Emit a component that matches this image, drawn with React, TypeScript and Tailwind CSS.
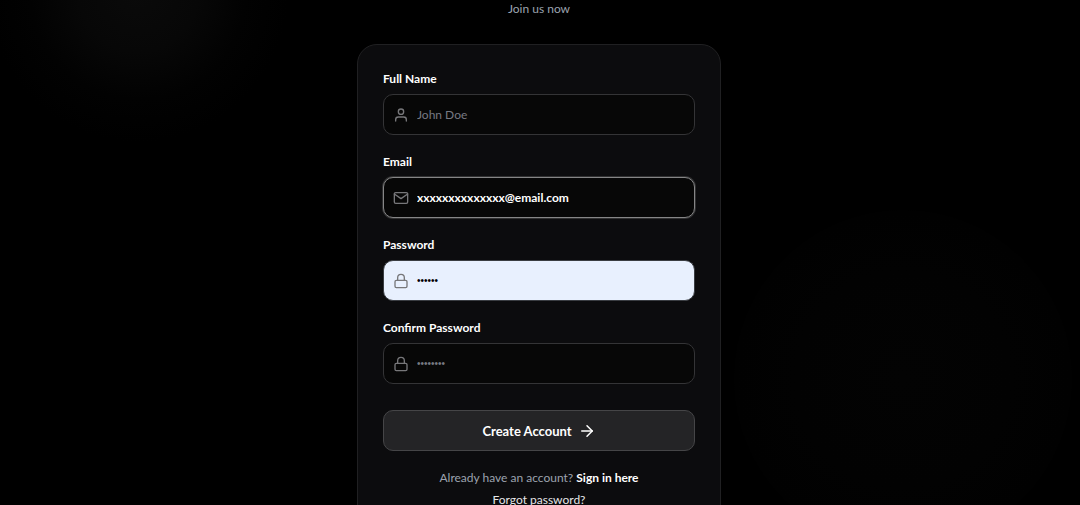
import { useState } from 'react'
import type { FormEvent, InputHTMLAttributes } from 'react'
import { FiArrowRight, FiLock, FiMail, FiUser } from 'react-icons/fi'
import type { IconType } from 'react-icons'
import clsx from 'clsx'

interface FieldProps extends InputHTMLAttributes<HTMLInputElement> {
    id: string
    label: string
    icon: IconType
    active?: boolean
    filled?: boolean
}

function Field({ id, label, icon: Icon, active, filled, type, ...props }: FieldProps) {
    return (
        <div>
            <label htmlFor={id} className="block mb-[7px] text-[12px] leading-4 font-bold text-white">
                {label}
            </label>
            <div
                className={clsx(
                    'flex items-center h-[41px] pl-[9px] rounded-[10px] border overflow-hidden',
                    active && 'border-[#858586] bg-[#070707] ring-1 ring-[#303031]',
                    filled && 'border-[#3a3d42] bg-[#e8f0fe]',
                    !active && !filled && 'border-[#343436] bg-[#070707]'
                )}
            >
                <Icon size={16} className="shrink-0 text-[#77777a]" aria-hidden="true" />
                <input
                    id={id}
                    type={type}
                    className={clsx(
                        'min-w-0 flex-1 h-full pl-2 pr-3 bg-transparent outline-none placeholder:font-normal placeholder:text-[#777983]',
                        type === 'password' ? "font-['Liberation_Sans',sans-serif] text-[10px]" : 'text-[12px] font-bold',
                        filled ? 'text-black' : 'text-white'
                    )}
                    {...props}
                />
            </div>
        </div>
    )
}

export default function App() {
    const [name, setName] = useState('')
    const [email, setEmail] = useState('xxxxxxxxxxxxxx@email.com')
    const [password, setPassword] = useState('secret')
    const [confirm, setConfirm] = useState('')

    const handleSubmit = (e: FormEvent) => {
        e.preventDefault()
    }

    return (
        <div className="relative min-h-screen overflow-hidden bg-black font-['Lato',sans-serif]">
            {/* Background glow */}
            <div className="absolute -top-[160px] -left-[14px] size-[304px] rounded-full bg-[radial-gradient(circle,#0a0a0a_0%,#070707_28%,#020202_50%,#000000_70%)]" />
            <div className="absolute top-[210px] right-[8px] size-[338px] rounded-full bg-[radial-gradient(circle,#030303_0%,#020202_45%,#010101_70%)]" />

            <main className="relative flex flex-col items-center pr-0.5 pb-8">
                <p className="h-[44px] text-[12px] leading-[18px] text-[#9ca3af]">Join us now</p>

                <div className="w-full max-w-[364px] px-[25px] pt-[26px] pb-[25px] rounded-[20px] border border-[#202022] bg-[#0c0c0e]">
                    <form onSubmit={handleSubmit} className="flex flex-col gap-[19px]">
                        <Field id="name" label="Full Name" icon={FiUser} type="text" placeholder="John Doe"
                            value={name} onChange={(e) => setName(e.target.value)} />
                        <Field id="email" label="Email" icon={FiMail} type="email" active
                            value={email} onChange={(e) => setEmail(e.target.value)} />
                        <Field id="password" label="Password" icon={FiLock} type="password" filled
                            value={password} onChange={(e) => setPassword(e.target.value)} />
                        <Field id="confirm" label="Confirm Password" icon={FiLock} type="password" placeholder="••••••••"
                            value={confirm} onChange={(e) => setConfirm(e.target.value)} />
                        <button
                            type="submit"
                            className="flex items-center justify-center gap-1.5 h-[41px] mt-[7px] rounded-[10px] border border-[#454547] bg-[#242426] text-[13px] leading-4 font-bold text-white"
                        >
                            Create Account
                            <FiArrowRight size={18} aria-hidden="true" />
                        </button>
                    </form>

                    <div className="mt-[17px] flex flex-col items-center gap-0.5 text-[12px] leading-5">
                        <p className="text-[#9ca3af]">
                            Already have an account?{' '}
                            <a href="#signin" className="font-bold text-white">Sign in here</a>
                        </p>
                        <a href="#forgot" className="text-[#e5e5e7]">Forgot password?</a>
                    </div>
                </div>
            </main>
        </div>
    )
}
